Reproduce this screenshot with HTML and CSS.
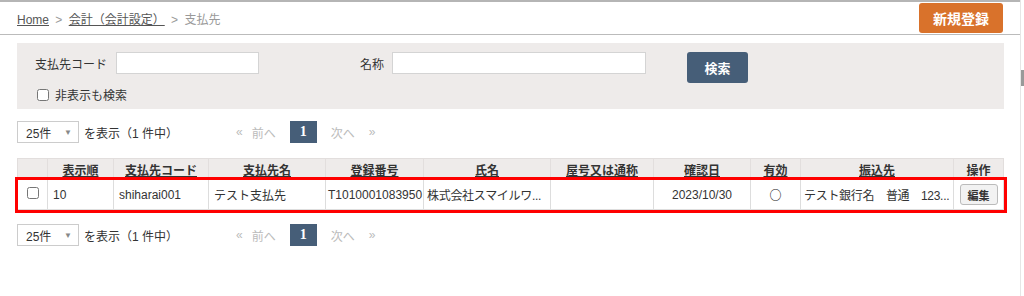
FILE: index.html
```html
<!DOCTYPE html>
<html lang="ja">
<head>
    <meta charset="UTF-8">
    <title>支払先</title>
    <link rel="stylesheet" href="styles.css">
</head>
<body>
    <div class="frame">
        <header class="topbar">
            <nav class="breadcrumb">
                <a href="#">Home</a>
                <span class="sep">&gt;</span>
                <a href="#">会計（会計設定）</a>
                <span class="sep">&gt;</span>
                <span class="current">支払先</span>
            </nav>
            <button class="btn-new">新規登録</button>
        </header>

        <main class="content">
            <div class="search">
                <div class="search-row">
                    <label class="field">
                        <span>支払先コード</span>
                        <input type="text" class="input-code">
                    </label>
                    <label class="field field-name">
                        <span>名称</span>
                        <input type="text" class="input-name">
                    </label>
                    <button class="btn-search">検索</button>
                </div>
                <label class="check">
                    <input type="checkbox">
                    <span>非表示も検索</span>
                </label>
            </div>

            <div class="pager">
                <div class="select"><span>25件</span><span class="arrow">▼</span></div>
                <span class="count">を表示（1 件中）</span>
                <div class="pages">
                    <span class="muted first">«</span>
                    <span class="muted">前へ</span>
                    <span class="page-current">1</span>
                    <span class="muted">次へ</span>
                    <span class="muted">»</span>
                </div>
            </div>

            <table class="list">
                <colgroup>
                    <col style="width:30px">
                    <col style="width:66px">
                    <col style="width:95px">
                    <col style="width:117px">
                    <col style="width:98px">
                    <col style="width:127px">
                    <col style="width:103px">
                    <col style="width:97px">
                    <col style="width:50px">
                    <col style="width:153px">
                    <col style="width:50px">
                </colgroup>
                <thead>
                    <tr>
                        <th></th>
                        <th><a href="#">表示順</a></th>
                        <th><a href="#">支払先コード</a></th>
                        <th><a href="#">支払先名</a></th>
                        <th><a href="#">登録番号</a></th>
                        <th><a href="#">氏名</a></th>
                        <th><a href="#">屋号又は通称</a></th>
                        <th><a href="#">確認日</a></th>
                        <th><a href="#">有効</a></th>
                        <th><a href="#">振込先</a></th>
                        <th>操作</th>
                    </tr>
                </thead>
                <tbody>
                    <tr class="marked">
                        <td class="c"><input type="checkbox"></td>
                        <td>10</td>
                        <td>shiharai001</td>
                        <td>テスト支払先</td>
                        <td class="num">T1010001083950</td>
                        <td class="tight">株式会社スマイルワ...</td>
                        <td></td>
                        <td class="c">2023/10/30</td>
                        <td class="c mark">○</td>
                        <td class="tight">テスト銀行名　普通　123...</td>
                        <td class="c"><button class="btn-edit">編集</button></td>
                    </tr>
                </tbody>
            </table>

            <div class="pager">
                <div class="select"><span>25件</span><span class="arrow">▼</span></div>
                <span class="count">を表示（1 件中）</span>
                <div class="pages">
                    <span class="muted first">«</span>
                    <span class="muted">前へ</span>
                    <span class="page-current">1</span>
                    <span class="muted">次へ</span>
                    <span class="muted">»</span>
                </div>
            </div>
        </main>
    </div>
    <div class="scrollbar"><div class="thumb"></div></div>
</body>
</html>
```

FILE: styles.css
```css
body {
    margin: 0;
    font-family: "Liberation Sans", "Noto Sans CJK JP", sans-serif;
    font-size: 12px;
    color: #333;
    background: #fff;
}
.frame {
    width: 1020px;
}
.topbar {
    display: flex;
    justify-content: space-between;
    align-items: center;
    height: 32px;
    padding: 0 17px;
    border-top: 2px solid #b5b5b5;
    border-bottom: 1px solid #bbb;
}
.breadcrumb a {
    color: #555;
}
.breadcrumb .sep {
    color: #999;
    margin: 0 3px;
}
.breadcrumb .current {
    color: #999;
}
.btn-new {
    height: 30px;
    padding: 0 14px;
    background: #d9722b;
    color: #fff;
    border: none;
    border-radius: 3px;
    font-family: inherit;
    font-size: 14px;
    font-weight: bold;
}
.content {
    padding: 0 16px 0 17px;
}
.search {
    margin-top: 8px;
    height: 66px;
    padding: 9px 0 0 18px;
    box-sizing: border-box;
    background: #eeebea;
}
.search-row {
    display: flex;
    align-items: flex-start;
}
.field {
    display: flex;
    align-items: center;
    gap: 9px;
    height: 22px;
}
.field input {
    height: 22px;
    box-sizing: border-box;
    border: 1px solid #d4d4d4;
    background: #fff;
    padding: 2px 4px;
}
.input-code {
    width: 143px;
}
.input-name {
    width: 254px;
}
.field-name {
    margin-left: 101px;
    gap: 8px;
}
.btn-search {
    margin-left: 41px;
    width: 61px;
    height: 31px;
    background: #465e78;
    color: #fff;
    border: none;
    border-radius: 3px;
    font-family: inherit;
    font-size: 13px;
    font-weight: bold;
}
.check {
    display: flex;
    align-items: center;
    gap: 6px;
    margin-top: 3px;
    margin-left: 2px;
}
.check input, .list input {
    margin: 0;
    width: 12px;
    height: 12px;
}
.pager {
    display: flex;
    align-items: center;
    margin-top: 12px;
    height: 22px;
}
.select {
    display: flex;
    justify-content: space-between;
    align-items: center;
    width: 62px;
    height: 22px;
    box-sizing: border-box;
    padding: 0 6px 0 8px;
    border: 1px solid #ccc;
    background: #fff;
}
.select .arrow {
    font-size: 8px;
    color: #888;
}
.count {
    margin-left: 5px;
}
.pages {
    display: flex;
    align-items: center;
    margin-left: 58px;
}
.pages .muted {
    color: #bbb;
    margin-right: 14px;
}
.pages .first {
    margin-right: 9px;
}
.page-current {
    width: 27px;
    height: 22px;
    line-height: 22px;
    text-align: center;
    background: #465e78;
    color: #fff;
    font-family: "Liberation Serif", serif;
    font-weight: bold;
    font-size: 14px;
    margin-right: 14px;
}
.list {
    margin-top: 15px;
    width: 986px;
    border-collapse: collapse;
    table-layout: fixed;
}
.list th {
    height: 20px;
    padding: 0 4px;
    background: #eeebea;
    border: 1px solid #e2dedd;
    font-weight: bold;
    text-align: center;
}
.list th a {
    color: #333;
}
.list td {
    height: 29px;
    padding: 0 5px;
    border: 1px solid #ddd;
    white-space: nowrap;
    overflow: hidden;
}
.list td.c {
    text-align: center;
}
.list td.num {
    padding: 0 2px;
}
.list td.tight {
    padding: 0 3px;
    letter-spacing: -0.3px;
}
.list td.mark {
    font-family: "Noto Sans CJK JP", sans-serif;
    font-size: 12px;
    font-weight: bold;
    color: #222;
}
.marked {
    outline: 3px solid #f00;
}
.btn-edit {
    width: 38px;
    height: 21px;
    padding: 0;
    background: #f2f2f2;
    border: 1px solid #bbb;
    border-radius: 3px;
    font-family: inherit;
    font-size: 11px;
    font-weight: bold;
    color: #333;
}
.list + .pager {
    margin-top: 14px;
}
.scrollbar {
    position: fixed;
    top: 0;
    right: 0;
    width: 3px;
    height: 100%;
    border-left: 1px solid #e6e6e6;
}
.thumb {
    margin-top: 70px;
    height: 16px;
    background: #999;
}
```
